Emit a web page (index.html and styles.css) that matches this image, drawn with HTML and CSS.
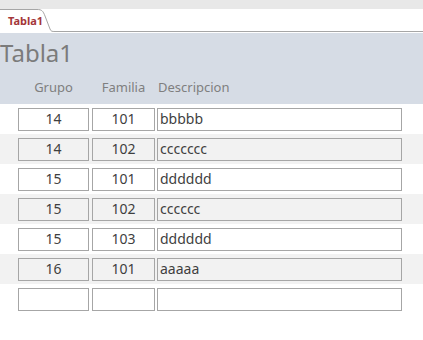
FILE: index.html
```html
<!DOCTYPE html>
<html>

<head>
    <meta charset="utf-8">
    <title>Tabla1</title>
    <link rel="stylesheet" href="styles.css">
</head>

<body>
    <div class="topstrip"></div>
    <div class="tabbar">
        <svg class="tab-outline" width="423" height="24" viewBox="0 0 423 24">
            <path d="M0 0.5 H37 C42 0.5 43 2 45 7 L50 20 C51 22.5 52 22.5 55 22.5 H423" fill="none" stroke="#a6a6a6" stroke-width="1" />
        </svg>
        <div class="tab">Tabla1</div>
    </div>
    <div class="header">
        <div class="title">Tabla1</div>
        <div class="colheads">
            <div class="colhead c1">Grupo</div>
            <div class="colhead c2">Familia</div>
            <div class="colhead c3 left">Descripcion</div>
        </div>
    </div>
    <div class="rows">
        <div class="row">
            <div class="field c1">14</div>
            <div class="field c2">101</div>
            <div class="field c3 left">bbbbb</div>
        </div>
        <div class="row alt">
            <div class="field c1">14</div>
            <div class="field c2">102</div>
            <div class="field c3 left">ccccccc</div>
        </div>
        <div class="row">
            <div class="field c1">15</div>
            <div class="field c2">101</div>
            <div class="field c3 left">dddddd</div>
        </div>
        <div class="row alt">
            <div class="field c1">15</div>
            <div class="field c2">102</div>
            <div class="field c3 left">cccccc</div>
        </div>
        <div class="row">
            <div class="field c1">15</div>
            <div class="field c2">103</div>
            <div class="field c3 left">dddddd</div>
        </div>
        <div class="row alt">
            <div class="field c1">16</div>
            <div class="field c2">101</div>
            <div class="field c3 left">aaaaa</div>
        </div>
        <div class="row">
            <div class="field c1"></div>
            <div class="field c2"></div>
            <div class="field c3 left"></div>
        </div>
    </div>
</body>

</html>
```

FILE: styles.css
```css
body {
    margin: 0;
    padding: 0;
    background: #fff;
    font-family: "Noto Sans", "Open Sans", sans-serif;
    overflow: hidden;
}

.topstrip {
    height: 9px;
    background: #e8e8e8;
}

.tabbar {
    position: relative;
    height: 24px;
    background: #fff;
}

.tab-outline {
    position: absolute;
    left: 0;
    top: 0;
}

.tab {
    position: relative;
    padding: 4px 0 0 8px;
    font-size: 11px;
    font-weight: bold;
    color: #a4373a;
    line-height: 16px;
}

.header {
    height: 71px;
    background: #d6dce5;
}

.title {
    padding-top: 4px;
    font-size: 24px;
    line-height: 32px;
    color: #7b7b7b;
}

.colheads {
    display: flex;
    margin-top: 9px;
    padding-left: 18px;
    gap: 0;
}

.colhead {
    font-size: 13px;
    line-height: 18px;
    color: #7f7f7f;
    text-align: center;
}

.c1 {
    width: 71px;
}

.c2 {
    width: 63px;
    margin-left: 3px;
}

.c3 {
    width: 245px;
    margin-left: 2px;
}

.left {
    text-align: left;
    padding-left: 2px;
}

.colhead.left {
    padding-left: 1px;
}

.row {
    display: flex;
    height: 30px;
    padding-left: 18px;
    padding-top: 4px;
    box-sizing: border-box;
}

.row.alt {
    background: #f2f2f2;
}

.field {
    height: 23px;
    box-sizing: border-box;
    border: 1px solid #a6a6a6;
    background: #fff;
    font-size: 14px;
    line-height: 20px;
    color: #3f3f3f;
    text-align: center;
}

.row.alt .field {
    background: #f2f2f2;
}

.field.left {
    text-align: left;
}
```
